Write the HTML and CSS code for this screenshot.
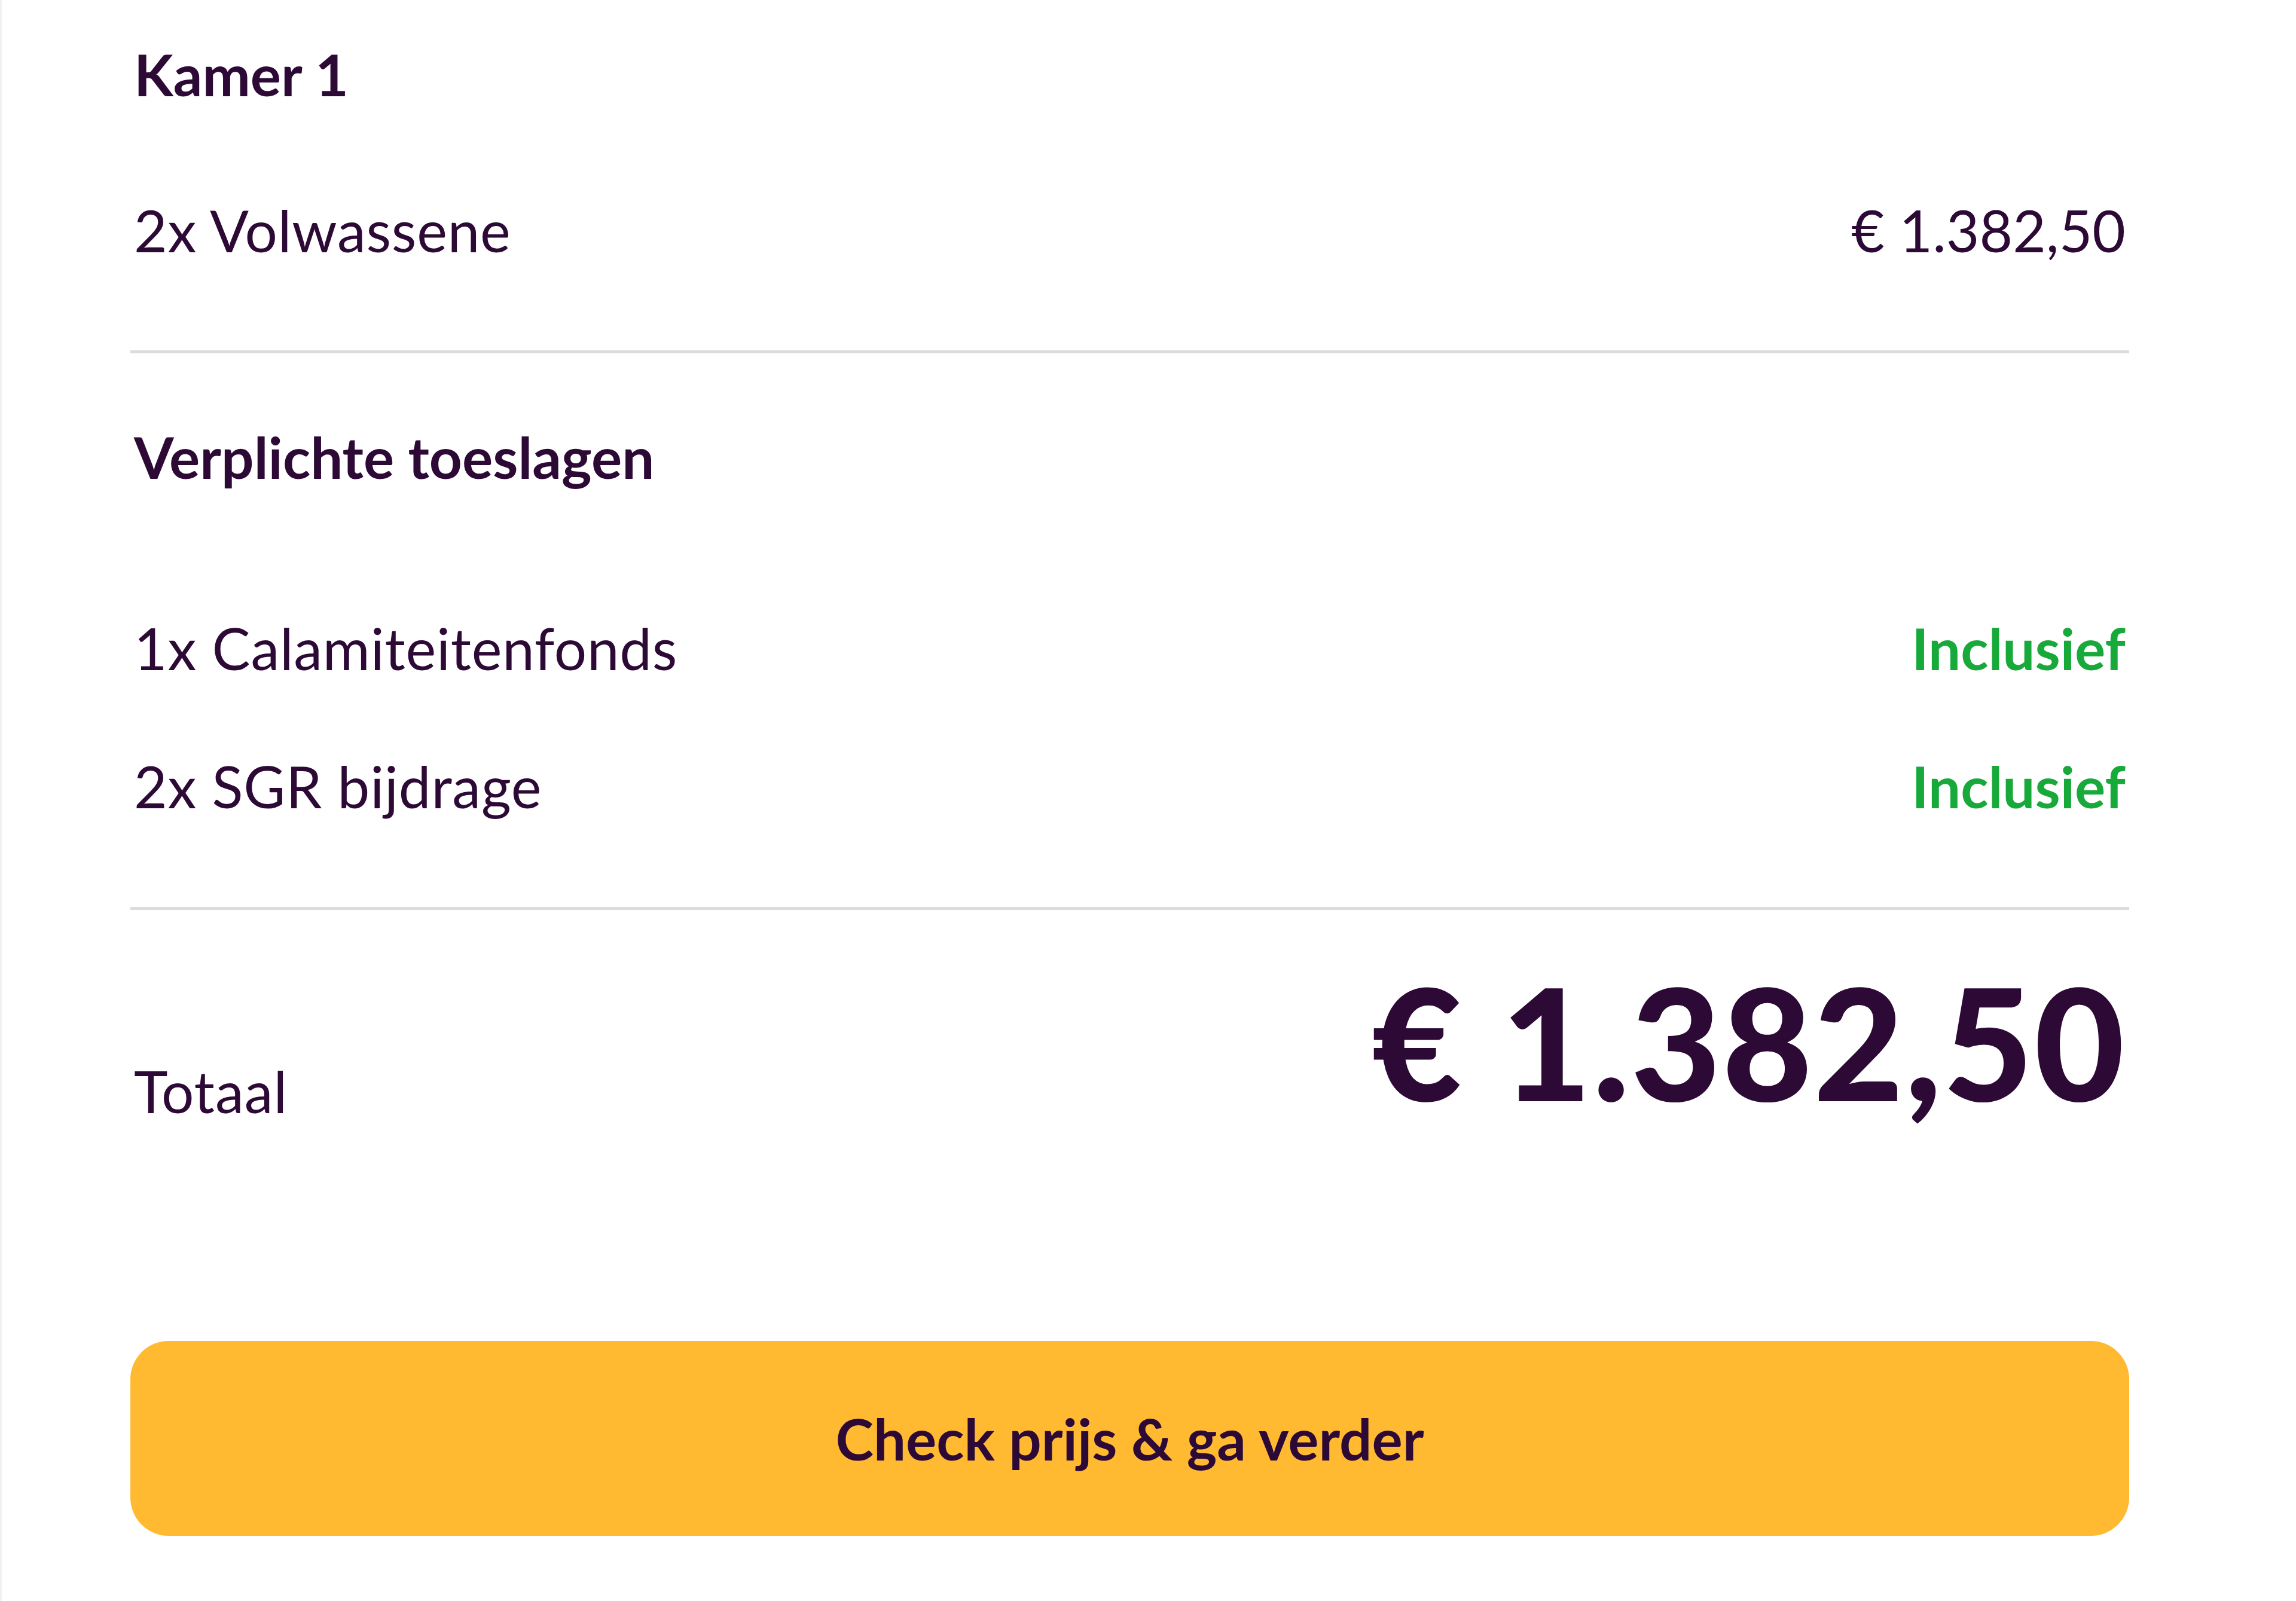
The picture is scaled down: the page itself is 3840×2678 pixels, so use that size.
FILE: index.html
```html
<!DOCTYPE html>
<html lang="nl">
<head>
<meta charset="utf-8">
<title>Prijsoverzicht</title>
<link rel="stylesheet" href="styles.css">
</head>
<body>
<main class="summary">
  <h2 class="heading heading-room">Kamer 1</h2>
  <div class="row row-room">
    <span class="label">2x Volwassene</span>
    <span class="value">€ 1.382,50</span>
  </div>
  <hr class="divider divider-first">
  <h2 class="heading heading-fees">Verplichte toeslagen</h2>
  <div class="row row-fee-first">
    <span class="label">1x Calamiteitenfonds</span>
    <span class="value value-included">Inclusief</span>
  </div>
  <div class="row row-fee">
    <span class="label">2x SGR bijdrage</span>
    <span class="value value-included">Inclusief</span>
  </div>
  <hr class="divider divider-second">
  <div class="total">
    <span class="total-label">Totaal</span>
    <span class="total-amount">€ 1.382,50</span>
  </div>
  <button class="cta" type="button">Check prijs &amp; ga verder</button>
</main>
</body>
</html>
```

FILE: styles.css
```css
html, body {
  margin: 0;
  padding: 0;
  background: #ffffff;
}

body {
  font-family: "Lato", "Noto Sans", "Liberation Sans", sans-serif;
  color: #2d0a36;
  min-height: 2678px;
  border-left: 3px solid #f2f2f2;
  box-sizing: border-box;
}

.summary {
  display: flex;
  flex-direction: column;
  padding: 66px 279px 0 215px;
}

.heading {
  margin: 0;
  font-size: 96px;
  line-height: 116px;
  font-weight: 700;
  padding-left: 6px;
}

.row {
  display: flex;
  justify-content: space-between;
  align-items: baseline;
  font-size: 96px;
  line-height: 116px;
  font-weight: 400;
  padding: 0 6px;
}

.label {
  letter-spacing: 0.8px;
}

.row-room {
  margin-top: 145px;
}

.value-included {
  color: #17aa3a;
  font-weight: 700;
}

.divider {
  border: 0;
  height: 5px;
  background: #dcdcdc;
  margin: 0;
}

.divider-first {
  margin-top: 143px;
}

.heading-fees {
  margin-top: 115px;
}

.row-fee-first {
  margin-top: 204px;
}

.row-fee {
  margin-top: 115px;
}

.divider-second {
  margin-top: 144px;
}

.total {
  display: flex;
  justify-content: space-between;
  align-items: flex-end;
  margin-top: 89px;
  padding: 0 6px;
}

.total-label {
  font-size: 96px;
  line-height: 116px;
  font-weight: 400;
  letter-spacing: 1px;
  margin-bottom: -12px;
}

.total-amount {
  font-size: 260px;
  line-height: 260px;
  font-weight: 900;
  letter-spacing: 2px;
}

.cta {
  margin-top: 372px;
  height: 326px;
  border: 0;
  border-radius: 64px;
  background: #ffba31;
  color: #2d0a36;
  font-family: inherit;
  font-size: 96px;
  line-height: 116px;
  font-weight: 700;
  cursor: pointer;
}
```
